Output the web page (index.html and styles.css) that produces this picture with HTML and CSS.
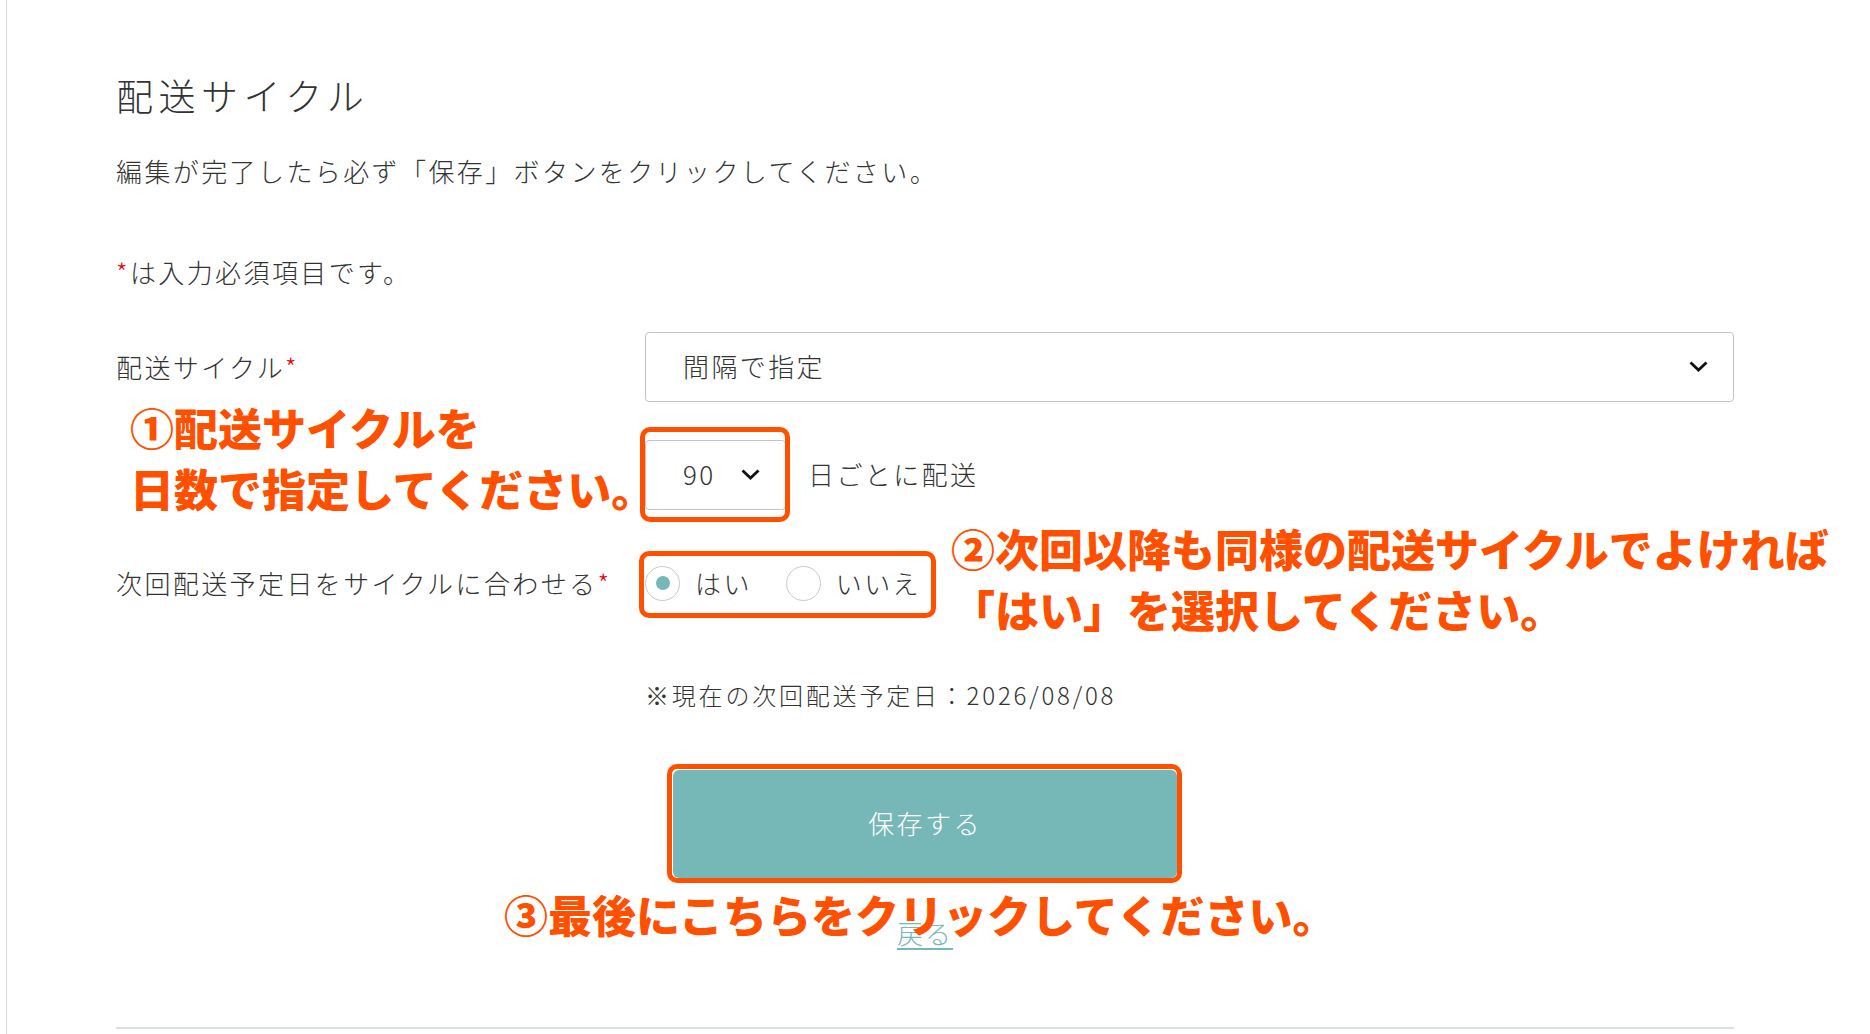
FILE: index.html
```html
<!DOCTYPE html>
<html lang="ja">
  <head>
    <meta charset="UTF-8" />
    <meta name="viewport" content="width=device-width, initial-scale=1.0" />
    <title>配送サイクル</title>
    <link rel="stylesheet" href="styles.css">
  </head>
  <body>
    <div class="page">
      <main class="content">
        <h1 class="page-title">配送サイクル</h1>
        <p class="lead">編集が完了したら必ず「保存」ボタンをクリックしてください。</p>
        <p class="required-note"><span class="req">*</span>は入力必須項目です。</p>

        <form class="cycle-form" onsubmit="return false;">
          <div class="form-row row-type">
            <div class="form-label">配送サイクル<span class="req">*</span></div>
            <div class="form-field">
              <div class="select select-wide">
                <span>間隔で指定</span>
                <svg class="chevron" viewBox="0 0 19 11"><polyline points="1.5,1.5 9.5,9 17.5,1.5" /></svg>
              </div>
            </div>
          </div>

          <div class="form-row row-interval">
            <div class="form-label"></div>
            <div class="form-field">
              <div class="marked marked-days">
                <div class="select select-days">
                  <span>90</span>
                  <svg class="chevron" viewBox="0 0 19 11"><polyline points="1.5,1.5 9.5,9 17.5,1.5" /></svg>
                </div>
              </div>
              <span class="unit">日ごとに配送</span>
            </div>
          </div>

          <div class="form-row row-sync">
            <div class="form-label">次回配送予定日をサイクルに合わせる<span class="req">*</span></div>
            <div class="form-field">
              <div class="marked marked-radio">
                <div class="radio-group">
                  <label class="radio checked"><span class="radio-circle"></span>はい</label>
                  <label class="radio"><span class="radio-circle"></span>いいえ</label>
                </div>
              </div>
            </div>
          </div>

          <div class="form-row row-note">
            <div class="form-label"></div>
            <p class="current-date">※現在の次回配送予定日：2026/08/08</p>
          </div>

          <div class="actions">
            <div class="marked marked-save">
              <button class="save-btn" type="submit">保存する</button>
            </div>
          </div>
          <a class="back-link" href="#">戻る</a>
        </form>

        <hr class="divider">
      </main>

      <!-- 操作説明の注釈 -->
      <p class="note note-1">①配送サイクルを<br>日数で指定してください。</p>
      <p class="note note-2">②次回以降も同様の配送サイクルでよければ<br>「はい」を選択してください。</p>
      <p class="note note-3">③最後にこちらをクリックしてください。</p>
    </div>
  </body>
</html>
```

FILE: styles.css
```css
* {
  box-sizing: border-box;
}

body {
  margin: 0;
  background: #fff;
  color: #333;
  font-family: "Noto Sans CJK JP", "Noto Sans", sans-serif;
  font-weight: 300;
}

.page {
  position: relative;
  margin-left: 6px;
  min-height: 1034px;
  border-left: 1px solid #d4dcdc;
}

.content {
  width: 1727px;
  padding: 70px 0 0 109px;
}

.page-title {
  margin: 0;
  font-size: 37px;
  font-weight: 300;
  line-height: 50px;
  letter-spacing: 5.5px;
}

.lead,
.required-note {
  font-size: 26px;
  line-height: 40px;
  letter-spacing: 2.4px;
}

.lead {
  margin: 31px 0 0;
}

.required-note {
  margin: 61px 0 0;
}

.req {
  color: #e60012;
}

.cycle-form {
  margin-top: 40px;
}

.form-row {
  display: grid;
  grid-template-columns: 529px 1fr;
  align-items: center;
  font-size: 26px;
  line-height: 40px;
  letter-spacing: 2.4px;
}

.row-interval {
  margin-top: 38px;
}

.row-sync {
  margin-top: 53px;
}

.row-note {
  margin-top: 72px;
}

.form-field {
  display: flex;
  align-items: center;
}

.select {
  display: flex;
  align-items: center;
  justify-content: space-between;
  height: 70px;
  padding: 0 25px 2px 37px;
  border: 1px solid #c4c4c4;
  border-radius: 4px;
  background: #fff;
}

.select-wide {
  width: 1089px;
}

.select-days {
  width: 141px;
}

.chevron {
  width: 19px;
  height: 11px;
}

.chevron polyline {
  fill: none;
  stroke: #111;
  stroke-width: 2.8;
}

.unit {
  margin-left: 22px;
  padding-bottom: 3px;
}

.radio-group {
  display: flex;
  align-items: center;
  gap: 34px;
  height: 35px;
}

.radio {
  display: flex;
  align-items: center;
  gap: 15px;
}

.radio-circle {
  display: flex;
  align-items: center;
  justify-content: center;
  width: 35px;
  height: 35px;
  border: 1px solid #c9c9c9;
  border-radius: 50%;
}

.radio.checked .radio-circle::before {
  content: "";
  width: 14px;
  height: 14px;
  border-radius: 50%;
  background: #76b8b8;
}

.current-date {
  margin: 0;
  font-size: 24px;
  letter-spacing: 2.8px;
}

.actions {
  display: flex;
  justify-content: center;
  margin-top: 55px;
}

.save-btn {
  display: block;
  width: 504px;
  height: 108px;
  padding-bottom: 4px;
  border: none;
  border-radius: 6px;
  background: #76b8b8;
  color: #fff;
  font-family: inherit;
  font-size: 26px;
  font-weight: 300;
  letter-spacing: 2.4px;
  cursor: pointer;
}

.back-link {
  display: block;
  width: fit-content;
  margin: 35px auto 0;
  color: #76b8b8;
  font-size: 26px;
  line-height: 40px;
  letter-spacing: 2px;
  text-decoration: underline;
  text-underline-offset: 4px;
}

.divider {
  width: 1618px;
  height: 2px;
  margin: 74px 0 0;
  border: none;
  background: #d8e0e0;
}

/* オレンジ枠（注釈） */
.marked {
  position: relative;
}

.marked::after {
  content: "";
  position: absolute;
  border: 5px solid #ff5000;
  border-radius: 10px;
  pointer-events: none;
}

.marked-days::after {
  inset: -13px -4px -12px -5px;
}

.marked-radio::after {
  inset: -15px -15px -17px -6px;
}

.marked-save::after {
  inset: -6px -5px -5px -6px;
}

.note {
  position: absolute;
  margin: 0;
  color: #ff5000;
  font-size: 44px;
  font-weight: 900;
  line-height: 61px;
  white-space: nowrap;
}

.note-1 {
  left: 123px;
  top: 397px;
}

.note-2 {
  left: 944px;
  top: 518px;
}

.note-3 {
  left: 497px;
  top: 884px;
}
```
